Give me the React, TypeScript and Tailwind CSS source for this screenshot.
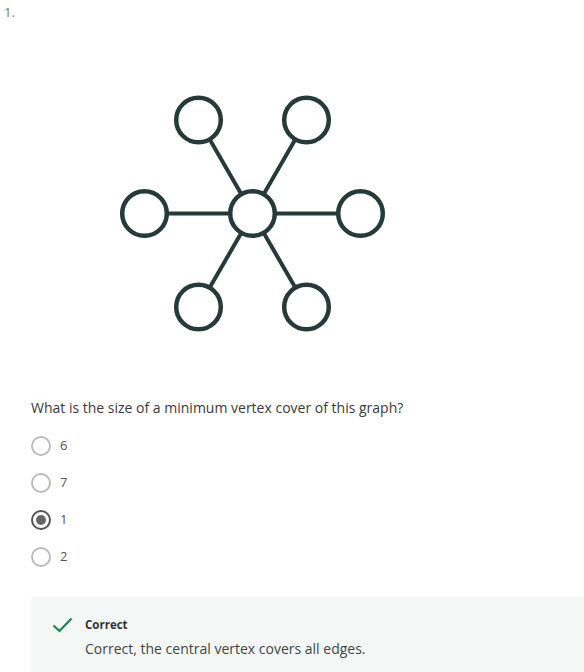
import React from 'react';

const C = { x: 142.5, y: 128.5 };
const R = 108;
const nodes = [
  { x: C.x - R / 2, y: C.y - 93.5 },
  { x: C.x + R / 2, y: C.y - 93.5 },
  { x: C.x - R, y: C.y },
  { x: C.x + R, y: C.y },
  { x: C.x - R / 2, y: C.y + 93.5 },
  { x: C.x + R / 2, y: C.y + 93.5 },
];

function StarGraph() {
  return (
    <svg width="280" height="250" viewBox="0 0 280 250" className="block">
      {nodes.map((n, i) => (
        <line key={i} x1={C.x} y1={C.y} x2={n.x} y2={n.y} stroke="#253a3b" strokeWidth="4" />
      ))}
      {[C, ...nodes].map((n, i) => (
        <circle key={i} cx={n.x} cy={n.y} r="22.3" fill="#fff" stroke="#253a3b" strokeWidth="4.5" />
      ))}
    </svg>
  );
}

const options = ['6', '7', '1', '2'];

export default function App() {
  return (
    <div className="w-[584px] h-[672px] overflow-hidden bg-white" style={{ fontFamily: '"Open Sans", sans-serif' }}>
      <div className="pl-[4px] pt-[3px] text-[13px] leading-[18px] text-[#777]">1.</div>
      <div className="pl-[110px] pt-[64px]">
        <StarGraph />
      </div>
      <div className="pl-[31px]">
        <p className="mt-[63px] text-[14px] leading-[20px] text-[#3a3a3a]">
          What is the size of a minimum vertex cover of this graph?
        </p>
        <div className="mt-[18px] flex flex-col gap-[17px]">
          {options.map((o, i) => (
            <label key={o} className="flex items-center gap-[9px] h-[20px]">
              {i === 2 ? (
                <span className="w-[20px] h-[20px] rounded-full border-2 border-[#555] flex items-center justify-center">
                  <span className="w-[10px] h-[10px] rounded-full bg-[#666]" />
                </span>
              ) : (
                <span className="w-[20px] h-[20px] rounded-full border-2 border-[#bbb]" />
              )}
              <span className="text-[13px] text-[#555]">{o}</span>
            </label>
          ))}
        </div>
        <div className="mt-[30px] bg-[#f3f8f6] h-[80px] pl-[21px] pt-[19px]">
          <div className="flex items-center gap-[12px]">
            <svg width="21" height="16" viewBox="0 0 21 16" fill="none">
              <path d="M1.5 8.5 L7.5 14 L19.5 1.5" stroke="#1f8354" strokeWidth="2.2" />
            </svg>
            <span className="text-[11.5px] font-bold text-[#333]">Correct</span>
          </div>
          <p className="pl-[33px] mt-[6px] text-[14px] leading-[20px] text-[#444]">
            Correct, the central vertex covers all edges.
          </p>
        </div>
      </div>
    </div>
  );
}
